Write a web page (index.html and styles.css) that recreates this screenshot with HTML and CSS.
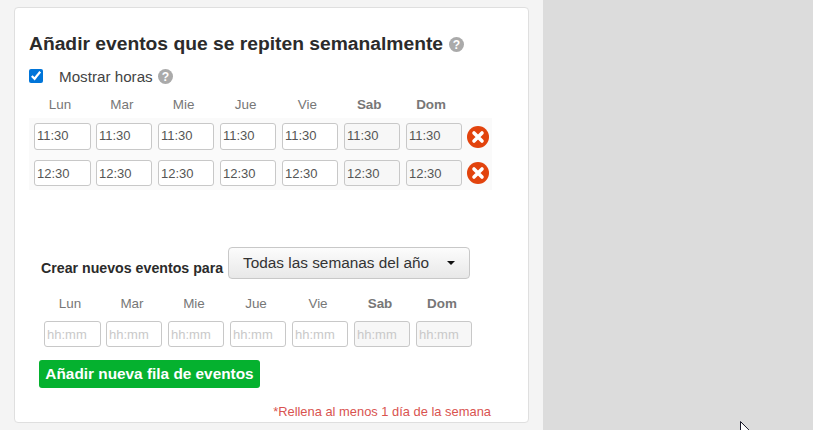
FILE: index.html
```html
<!DOCTYPE html>
<html lang="es">
<head>
<meta charset="utf-8">
<title>Añadir eventos</title>
<link rel="stylesheet" href="styles.css">
</head>
<body>
<main class="main">
  <section class="card">
    <h2 class="title">Añadir eventos que se repiten semanalmente
      <svg class="help help-lg" viewBox="0 0 16 16"><circle cx="8" cy="8" r="8" fill="#aaa"/><text x="8" y="12.5" class="help-q">?</text></svg>
    </h2>
    <div class="show-hours">
      <input class="check" type="checkbox" checked>
      <span class="show-label">Mostrar horas</span>
      <svg class="help" viewBox="0 0 16 16"><circle cx="8" cy="8" r="8" fill="#aaa"/><text x="8" y="12.5" class="help-q">?</text></svg>
    </div>
    <div class="days days-top">
      <span>Lun</span><span>Mar</span><span>Mie</span><span>Jue</span><span>Vie</span><b>Sab</b><b>Dom</b>
    </div>
    <div class="rows">
      <div class="row row-first">
        <input class="time" value="11:30"><input class="time" value="11:30"><input class="time" value="11:30"><input class="time" value="11:30"><input class="time" value="11:30"><input class="time weekend" value="11:30"><input class="time weekend" value="11:30">
        <svg class="remove" viewBox="0 0 22 22"><circle cx="11" cy="11" r="11" fill="#e2430d"/><path d="M7 7l8 8M15 7l-8 8" stroke="#fff" stroke-width="3.6" stroke-linecap="round"/></svg>
      </div>
      <div class="row row-second">
        <input class="time" value="12:30"><input class="time" value="12:30"><input class="time" value="12:30"><input class="time" value="12:30"><input class="time" value="12:30"><input class="time weekend" value="12:30"><input class="time weekend" value="12:30">
        <svg class="remove" viewBox="0 0 22 22"><circle cx="11" cy="11" r="11" fill="#e2430d"/><path d="M7 7l8 8M15 7l-8 8" stroke="#fff" stroke-width="3.6" stroke-linecap="round"/></svg>
      </div>
    </div>
    <div class="create">
      <strong class="create-label">Crear nuevos eventos para</strong>
      <button class="dropdown" type="button">Todas las semanas del año<span class="caret"></span></button>
    </div>
    <div class="days days-new">
      <span>Lun</span><span>Mar</span><span>Mie</span><span>Jue</span><span>Vie</span><b>Sab</b><b>Dom</b>
    </div>
    <div class="new-row">
      <input class="time" placeholder="hh:mm"><input class="time" placeholder="hh:mm"><input class="time" placeholder="hh:mm"><input class="time" placeholder="hh:mm"><input class="time" placeholder="hh:mm"><input class="time weekend" placeholder="hh:mm"><input class="time weekend" placeholder="hh:mm">
    </div>
    <button class="add" type="button">Añadir nueva fila de eventos</button>
    <p class="note">*Rellena al menos 1 día de la semana</p>
  </section>
</main>
<aside class="side"></aside>
<svg class="cursor" viewBox="0 0 10 10"><path d="M0.5 0.5V10M0.5 0.5L9 9" fill="none" stroke="#1a1a2a" stroke-width="1"/><path d="M1 2V10H6L9 9.500Z" fill="#fff"/></svg>
</body>
</html>
```
FILE: styles.css
```css
* { box-sizing: border-box; }
html, body { height: 430px; }
body {
  margin: 0;
  display: flex;
  overflow: hidden;
  background: #f4f4f4;
  font-family: "Liberation Sans", Arial, sans-serif;
  color: #333;
}
.main { width: 543px; padding: 7px 14px 0; flex: none; }
.side { flex: 1; background: #dcdcdc; }
.card {
  width: 515px;
  height: 416px;
  background: #fff;
  border: 1px solid #dfdfdf;
  border-radius: 4px;
  padding: 22px 0 0 14px;
}
.title {
  margin: 0;
  font-size: 19.26px;
  line-height: 28px;
  font-weight: 700;
  color: #2b2b2b;
  display: flex;
  align-items: center;
  gap: 6px;
}
.help { width: 15px; height: 15px; flex: none; }
.help-q { font: 700 13px "Liberation Sans", sans-serif; fill: #fff; text-anchor: middle; }
.show-hours {
  display: flex;
  align-items: center;
  margin-top: 8px;
  height: 20px;
  font-size: 15.2px;
  color: #444;
}
.check { width: 14px; height: 14px; margin: 0 16px 0 0; accent-color: #0075d9; flex: none; }
.show-label { margin-right: 5px; }
.days {
  display: grid;
  grid-template-columns: repeat(7, 50px);
  column-gap: 12px;
  font-size: 13.44px;
  line-height: 16px;
  color: #777;
  text-align: center;
}
.days b { color: #777; }
.days-top { margin: 11px 0 0 6px; column-gap: 11.85px; }
.days-new { margin: 17px 0 0 16px; }
.rows { margin-top: 5px; width: 463px; }
.row {
  display: flex;
  align-items: flex-start;
  gap: 6px;
  background: #fafafa;
  padding: 5px 0 0 5px;
}
.row-first { height: 37px; }
.row-second { height: 35px; }
.time {
  width: 56px;
  height: 26px;
  flex: none;
  padding: 0 2px;
  border: 1px solid #c8c8c8;
  border-radius: 3px;
  background: #fff;
  font: 13px "Liberation Sans", sans-serif;
  color: #555;
  outline: none;
}
.time:first-child { width: 57px; margin-right: -1px; }
.row-first .time { height: 27px; padding-bottom: 2px; }
.weekend { background: #f7f7f7; }
.time::placeholder { color: #c9c9c9; opacity: 1; }
.remove { width: 22px; height: 22px; margin: 3px 0 0 -1px; flex: none; }
.row-second .remove { margin-top: 2px; }
.create {
  display: flex;
  align-items: center;
  margin: 57px 0 0 12px;
}
.create-label { width: 187px; font-size: 14.2px; color: #2b2b2b; padding-top: 10px; white-space: nowrap; }
.dropdown {
  width: 242px;
  height: 32px;
  padding: 0 14px 0 14px;
  display: flex;
  align-items: center;
  justify-content: space-between;
  border: 1px solid #c8c8c8;
  border-radius: 4px;
  background: linear-gradient(#fcfcfc, #e8e8e8);
  font: 15.36px "Liberation Sans", sans-serif;
  color: #333;
}
.caret {
  width: 0;
  height: 0;
  border: 4px solid transparent;
  border-top-color: #111;
  border-bottom: 0;
}
.new-row { display: flex; gap: 6px; margin: 9px 0 0 15px; }
.add {
  display: block;
  width: 221px;
  height: 28px;
  margin: 13px 0 0 10px;
  padding: 0;
  border: 0;
  border-radius: 3px;
  background: #05b12f;
  color: #fff;
  font: 700 15.36px "Liberation Sans", sans-serif;
}
.note {
  margin: 16px 0 0;
  width: 462px;
  text-align: right;
  font-size: 12.9px;
  line-height: 16px;
  color: #d9534f;
}
.cursor { position: absolute; left: 740px; top: 421px; width: 10px; height: 10px; }
```
